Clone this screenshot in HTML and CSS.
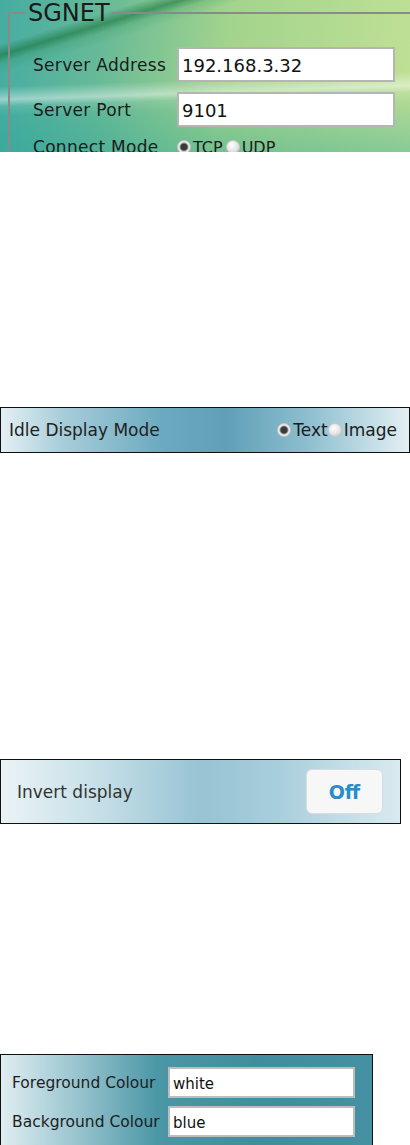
FILE: index.html
```html
<!DOCTYPE html>
<html lang="en">
<head>
  <meta charset="UTF-8">
  <title>SGNET Settings</title>
  <link rel="stylesheet" href="styles.css">
</head>
<body>
  <div class="net-panel">
    <fieldset class="net-box">
      <legend>SGNET</legend>
      <div class="net-row">
        <label for="server-address">Server Address</label>
        <input type="text" id="server-address" value="192.168.3.32">
      </div>
      <div class="net-row">
        <label for="server-port">Server Port</label>
        <input type="text" id="server-port" value="9101">
      </div>
      <div class="net-row">
        <label>Connect Mode</label>
        <div class="radio-group">
          <label class="radio"><input type="radio" name="mode" checked>TCP</label>
          <label class="radio"><input type="radio" name="mode">UDP</label>
        </div>
      </div>
    </fieldset>
  </div>

  <div class="bar idle-bar">
    <span class="bar-label">Idle Display Mode</span>
    <div class="radio-group">
      <label class="radio"><input type="radio" name="idle" checked>Text</label>
      <label class="radio"><input type="radio" name="idle">Image</label>
    </div>
  </div>

  <div class="bar invert-bar">
    <span class="bar-label">Invert display</span>
    <button class="toggle" type="button">Off</button>
  </div>

  <div class="colour-panel">
    <div class="colour-row">
      <label for="fg-colour">Foreground Colour</label>
      <input type="text" id="fg-colour" value="white">
    </div>
    <div class="colour-row">
      <label for="bg-colour">Background Colour</label>
      <input type="text" id="bg-colour" value="blue">
    </div>
  </div>
</body>
</html>
```

FILE: styles.css
```css
body {
  margin: 0;
  font-family: 'DejaVu Sans', sans-serif;
  color: #1c1c1c;
  background: #fff;
}

/* SGNET panel */
.net-panel {
  height: 152px;
  overflow: hidden;
  padding-top: 1px;
  box-sizing: border-box;
  background:
    linear-gradient(178deg, rgba(255, 255, 255, 0) 52%, rgba(255, 255, 255, 0.45) 60%, rgba(255, 255, 255, 0.1) 64%, rgba(255, 255, 255, 0) 70%),
    linear-gradient(163deg, rgba(0, 0, 0, 0) 16%, rgba(25, 115, 60, 0.6) 20%, rgba(40, 140, 80, 0.2) 23%, rgba(0, 0, 0, 0) 27%),
    linear-gradient(180deg, rgba(0, 0, 0, 0) 55%, rgba(30, 160, 150, 0.35) 100%),
    linear-gradient(95deg, #45aca2 0%, #68ba98 25%, #a3d48c 55%, #bfe095 100%);
}

.net-box {
  margin: 0 -20px 0 8px;
  padding: 22px 0 0 23px;
  border: 2px solid #8a8a8a;
  min-height: 200px;
}

.net-box legend {
  font-size: 24px;
  padding: 0 2px;
  margin-left: -7px;
  line-height: 24px;
  color: #1a1a1a;
}

.net-row {
  display: flex;
  align-items: center;
  margin-bottom: 10px;
}

.net-row > label {
  width: 144px;
  font-size: 17px;
  letter-spacing: 0.3px;
  white-space: nowrap;
}

.net-row input[type="text"] {
  width: 218px;
  height: 35px;
  box-sizing: border-box;
  border: 2px solid #b5b5b5;
  padding: 2px 3px 0;
  font-family: 'DejaVu Sans', sans-serif;
  font-size: 18px;
  color: #111;
}

/* radios */
.radio-group {
  display: flex;
  align-items: center;
}

.radio {
  display: flex;
  align-items: center;
  font-size: 16px;
}

.net-row .radio {
  margin-right: 3px;
}

.radio input {
  appearance: none;
  -webkit-appearance: none;
  width: 14px;
  height: 14px;
  margin: 0 2px 0 0;
  border-radius: 50%;
  border: 1px solid #c8c8c8;
  background: radial-gradient(circle at 40% 35%, #ffffff 0%, #e4e4e4 55%, #bdbdbd 100%);
}

.radio input:checked {
  background: radial-gradient(circle, #3a3a3a 0 3px, #9a9a9a 4px, #f0f0f0 5px, #d0d0d0 100%);
}

/* bars */
.bar {
  display: flex;
  align-items: center;
  justify-content: space-between;
  border: 1px solid #111;
  box-sizing: border-box;
}

.bar-label {
  font-size: 17px;
  color: #333;
}

.idle-bar {
  margin-top: 255px;
  height: 46px;
  width: 410px;
  padding: 0 12px 0 8px;
  background: linear-gradient(90deg, #e4f0f4 0%, #a8cdda 15%, #6aa9bf 40%, #609fb7 55%, #8dbecf 75%, #e3eff3 100%);
}

.idle-bar .bar-label {
  color: #222;
}

.idle-bar .radio {
  font-size: 17px;
}

.invert-bar {
  margin-top: 306px;
  height: 65px;
  width: 401px;
  padding: 0 17px 0 16px;
  background: linear-gradient(90deg, #eaf3f6 0%, #c5dfe7 25%, #97c3d3 50%, #a9cfdc 70%, #d9eaf0 100%);
}

.toggle {
  width: 77px;
  height: 45px;
  border: 1px solid #dcdcdc;
  border-radius: 6px;
  background: #f7f7f7;
  color: #2a8cc8;
  font-family: 'DejaVu Sans', sans-serif;
  font-weight: bold;
  font-size: 19px;
}

/* colour panel */
.colour-panel {
  margin-top: 230px;
  width: 373px;
  height: 92px;
  box-sizing: border-box;
  border: 1px solid #111;
  padding: 12px 0 0 11px;
  background: linear-gradient(90deg, #dfedf1 0%, #93c1cc 22%, #4c97a6 42%, #3f8d9e 70%, #4591a3 100%);
}

.colour-row {
  display: flex;
  align-items: center;
  margin-bottom: 8px;
}

.colour-row label {
  width: 156px;
  font-size: 15.5px;
  color: #1e1e1e;
}

.colour-row input {
  width: 187px;
  height: 31px;
  box-sizing: border-box;
  border: 2px solid #bdbdbd;
  padding: 2px 3px 0;
  font-family: 'DejaVu Sans', sans-serif;
  font-size: 15px;
  color: #111;
}
```
